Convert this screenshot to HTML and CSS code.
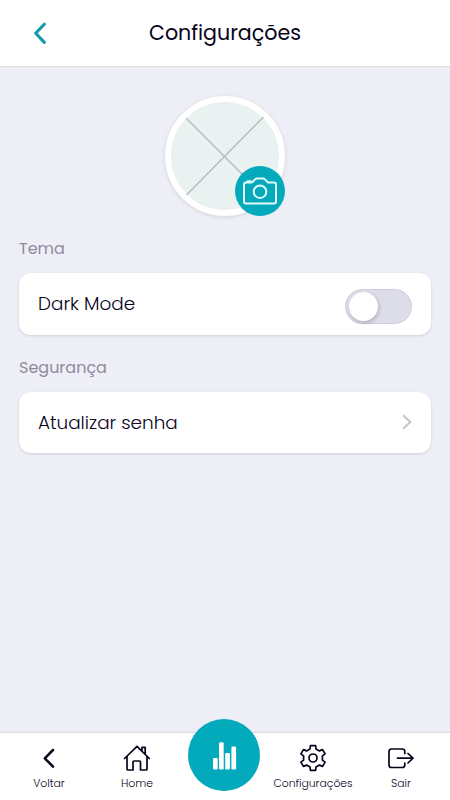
FILE: index.html
```html
<!DOCTYPE html>
<html lang="pt-BR">
<head>
  <meta charset="UTF-8">
  <meta name="viewport" content="width=device-width, initial-scale=1.0">
  <title>Configurações</title>
  <link rel="stylesheet" href="styles.css">
</head>
<body>
  <!-- Header -->
  <header class="header">
    <a href="#" class="back" aria-label="Voltar">
      <svg width="14" height="22" viewBox="0 0 14 22"><path d="M11.3 2.2 L2.7 11.3 L11.3 20.4"/></svg>
    </a>
    <h1>Configurações</h1>
  </header>

  <main class="content">
    <!-- Profile picture -->
    <div class="avatar">
      <svg class="avatar-image" width="108" height="108" viewBox="0 0 108 108">
        <path d="M15.5 16.5 L92 93 M92 15.5 L16 92.5"/>
      </svg>
      <button class="camera" aria-label="Alterar foto">
        <svg width="34" height="28" viewBox="0 0 34 28">
          <path d="M9.5 5 L12 2.4 Q13 1.5 14 1.5 H20 Q21 1.5 22 2.4 L25 5.5 H31 Q33 5.5 33 7.5 V24.5 Q33 26.5 31 26.5 H3 Q1 26.5 1 24.5 V7.5 Q1 5.5 3 5.5 H8 Q9 5.5 9.5 5 Z M4.5 4.2 H7.5"/>
          <circle cx="17" cy="14.7" r="6.3"/>
        </svg>
      </button>
    </div>

    <!-- Theme -->
    <section class="group">
      <h2>Tema</h2>
      <div class="card card-theme">
        <span>Dark Mode</span>
        <label class="switch">
          <input type="checkbox">
          <span class="slider"></span>
        </label>
      </div>
    </section>

    <!-- Security -->
    <section class="group">
      <h2>Segurança</h2>
      <a href="#" class="card card-password">
        <span>Atualizar senha</span>
        <svg class="arrow" width="10" height="16" viewBox="0 0 10 16"><path d="M1.7 1.7 L8.3 8 L1.7 14.3"/></svg>
      </a>
    </section>
  </main>

  <!-- Bottom menu -->
  <nav class="menu">
    <a href="#" class="menu-item">
      <svg class="chevron" width="28" height="28" viewBox="0 0 28 28"><path d="M18 6 L9.8 14.3 L18 22.6"/></svg>
      <span>Voltar</span>
    </a>
    <a href="#" class="menu-item">
      <svg width="28" height="28" viewBox="0 0 28 28"><path d="M1.5 14.5 L14 2.3 L26.3 14.5 M4 12.5 V25 Q4 26 5 26 H10 V18 Q10 17 11 17 H16.5 Q17.5 17 17.5 18 V26 H23 Q24 26 24 25 V12.5 M19 7 V3.3 H22.2 V10"/></svg>
      <span>Home</span>
    </a>
    <a href="#" class="menu-main" aria-label="Relatórios">
      <svg width="26" height="28" viewBox="0 0 26 28">
        <rect x="2" y="16" width="4.7" height="11.5" rx="1.3"/>
        <rect x="8" y="0.2" width="4.7" height="27.3" rx="1.3"/>
        <rect x="14.2" y="11" width="4.7" height="16.5" rx="1.3"/>
        <rect x="20.4" y="4.5" width="4.7" height="23" rx="1.3"/>
      </svg>
    </a>
    <a href="#" class="menu-item">
      <svg width="28" height="28" viewBox="0 0 28 28">
        <path d="M11.4 1.7 H16.6 L17 5 L20.4 6.9 L23.6 5.6 L26.1 9.9 L23.4 11.9 V16.1 L26.1 18.1 L23.6 22.4 L20.4 21.1 L17 23 L16.6 26.4 H11.4 L11 23 L7.6 21.1 L4.4 22.4 L1.9 18.1 L4.6 16.1 V11.9 L1.9 9.9 L4.4 5.6 L7.6 6.9 L11 5 Z"/>
        <circle cx="14" cy="14" r="4"/>
      </svg>
      <span>Configurações</span>
    </a>
    <a href="#" class="menu-item">
      <svg width="28" height="28" viewBox="0 0 28 28"><path d="M17.8 9.5 V7.5 Q17.8 5 15.3 5 H4.5 Q2 5 2 7.5 V21 Q2 23.5 4.5 23.5 H15.3 Q17.8 23.5 17.8 21 V19 M10.5 14.2 H26 M21 9.5 L26 14.2 L21 19"/></svg>
      <span>Sair</span>
    </a>
  </nav>
</body>
</html>
```
FILE: styles.css
```css
* {
  box-sizing: border-box;
}

body {
  margin: 0;
  height: 100vh;
  display: flex;
  flex-direction: column;
  font-family: 'Poppins', 'Inter', sans-serif;
  background-color: #edeef6;
  color: #07041c;
}

a {
  color: inherit;
  text-decoration: none;
}

svg {
  display: block;
  fill: none;
  stroke: currentColor;
  stroke-linecap: round;
  stroke-linejoin: round;
}

/* Header */
.header {
  height: 67px;
  flex-shrink: 0;
  display: grid;
  grid-template-columns: 60px 1fr 60px;
  align-items: center;
  background-color: #fff;
  border-bottom: 1px solid #dcdce3;
}

.back {
  padding-left: 33px;
  color: #109cad;
  stroke-width: 3.1;
}

.header h1 {
  margin: 0;
  font-size: 20.6px;
  font-weight: 400;
  line-height: 30px;
  text-align: center;
  white-space: nowrap;
}

.content {
  flex: 1;
  padding: 29px 19px 0;
}

/* Profile picture */
.avatar {
  position: relative;
  width: 120px;
  height: 120px;
  margin: 0 auto;
  border: 6px solid #fff;
  border-radius: 50%;
  background-color: #eaf1f1;
  box-shadow: 0 1px 4px rgba(0, 0, 0, 0.12);
}

.avatar-image {
  color: #b5baba;
  stroke-width: 1.4;
}

.camera {
  position: absolute;
  right: -6px;
  bottom: -6px;
  width: 50px;
  height: 50px;
  display: flex;
  align-items: center;
  justify-content: center;
  padding: 0;
  border: none;
  border-radius: 50%;
  background-color: #02aabc;
  color: #e3fafa;
  stroke-width: 2;
}

/* Groups */
.group h2 {
  margin: 20px 0 12px;
  font-size: 16px;
  font-weight: 400;
  line-height: 25px;
  color: #908a9d;
}

.card {
  height: 62px;
  display: flex;
  align-items: center;
  justify-content: space-between;
  padding: 0 19px;
  border-radius: 12px;
  background-color: #fff;
  box-shadow: 0 1px 3px rgba(0, 0, 0, 0.12);
  font-size: 18.4px;
  font-weight: 300;
}

.card-theme {
  padding-bottom: 1px;
}

.card-password {
  height: 61px;
  padding-bottom: 1px;
}

.arrow {
  color: #c5c5c9;
  stroke-width: 2;
}

/* Switch */
.switch input {
  display: none;
}

.slider {
  display: flex;
  align-items: center;
  width: 67px;
  height: 35px;
  margin-top: 5px;
  padding-left: 3px;
  border: 1px solid #cecddd;
  border-radius: 18px;
  background-color: #dddce9;
}

.slider::before {
  content: "";
  width: 29px;
  height: 29px;
  border-radius: 50%;
  background-color: #fff;
  box-shadow: 1px 2px 4px rgba(0, 0, 0, 0.2);
}

.switch input:checked + .slider {
  justify-content: flex-end;
  background-color: #02aabc;
}

/* Bottom menu */
.menu {
  height: 67px;
  flex-shrink: 0;
  display: grid;
  grid-template-columns: repeat(5, 88px);
  justify-content: center;
  background-color: #fff;
  box-shadow: 0 -1px 2px rgba(0, 0, 0, 0.1);
}

.menu-item {
  display: flex;
  flex-direction: column;
  align-items: center;
  gap: 4px;
  padding-top: 11px;
  font-size: 10.8px;
  font-weight: 300;
  line-height: 16px;
  white-space: nowrap;
  stroke-width: 1.7;
}

.chevron {
  stroke-width: 2.5;
}

.menu-main {
  justify-self: center;
  width: 72px;
  height: 72px;
  margin: -14px 2px 0 0;
  display: flex;
  align-items: center;
  justify-content: center;
  padding-top: 2px;
  border-radius: 50%;
  background-color: #02aabc;
}

.menu-main svg {
  fill: #fff;
  stroke: none;
}
```
